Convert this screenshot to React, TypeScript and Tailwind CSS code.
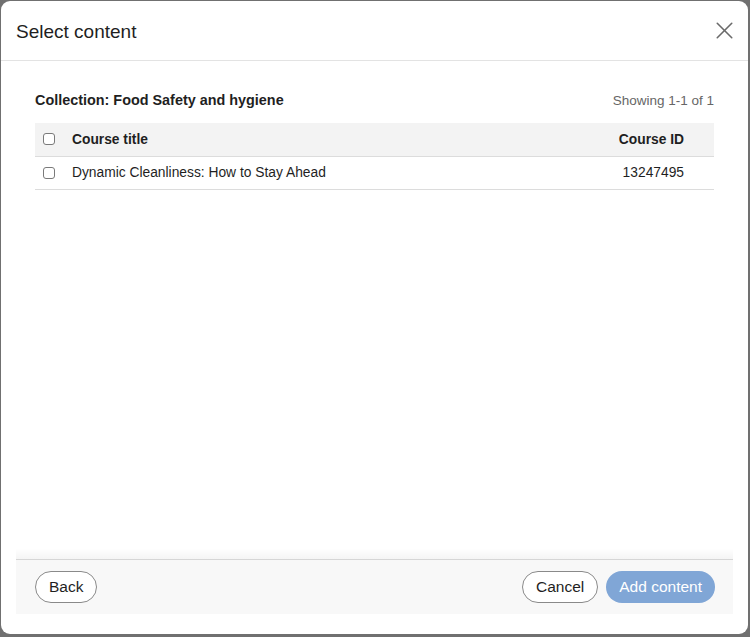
import { X } from "lucide-react";

interface Course {
  title: string;
  id: string;
}

const courses: Course[] = [
  { title: "Dynamic Cleanliness: How to Stay Ahead", id: "13247495" },
];

const Checkbox = () => (
  <span className="inline-block w-[12px] h-[12px] rounded-[3px] border border-[#7a7a7a] bg-white" />
);

export default function App() {
  return (
    <div
      className="h-[637px] w-[750px] bg-[#707070] pt-px pl-px pr-[2px] pb-[3px]"
      style={{ fontFamily: '"Liberation Sans", Arial, sans-serif' }}
    >
      <div className="h-full w-full bg-white rounded-[9px] flex flex-col overflow-hidden">
        {/* Header */}
        <div className="h-[60px] shrink-0 border-b border-[#e3e3e3] flex items-center justify-between pl-[15px] pr-[9px] pt-[3px]">
          <h1 className="text-[19px] text-[#1f1f1f]">Select content</h1>
          <X className="w-[29px] h-[29px] text-[#6a6a6a] -mt-[3px]" strokeWidth={1.3} />
        </div>

        {/* Body */}
        <div className="flex-1 px-[34px] pt-[30px]">
          <div className="flex items-center justify-between h-[20px]">
            <h2 className="text-[14.4px] font-bold text-[#1f1f1f]">
              Collection: Food Safety and hygiene
            </h2>
            <span className="text-[13.5px] text-[#666]">Showing 1-1 of 1</span>
          </div>

          <table className="w-full mt-[12px] border-collapse text-[13.8px] text-[#1f1f1f]">
            <thead>
              <tr className="bg-[#f3f3f3] border-b border-[#dcdcdc] h-[33px]">
                <th className="w-[37px] pl-[8px] text-left align-middle">
                  <div className="flex">
                    <Checkbox />
                  </div>
                </th>
                <th className="text-left font-bold pt-[2px]">Course title</th>
                <th className="text-right font-bold pr-[30px] pt-[2px]">Course ID</th>
              </tr>
            </thead>
            <tbody>
              {courses.map((c) => (
                <tr key={c.id} className="border-b border-[#dcdcdc] h-[33px]">
                  <td className="pl-[8px] align-middle">
                    <div className="flex">
                      <Checkbox />
                    </div>
                  </td>
                  <td className="pt-[2px]">{c.title}</td>
                  <td className="text-right pr-[30px] pt-[2px]">{c.id}</td>
                </tr>
              ))}
            </tbody>
          </table>
        </div>

        {/* Footer */}
        <div className="shrink-0 px-[15px] pb-[20px]">
          <div className="h-[11px] bg-gradient-to-b from-transparent to-black/[0.04]" />
          <div className="border-t border-[#d6d6d6] bg-[#f8f8f8] h-[55px] flex items-center justify-between pl-[19px] pr-[18px]">
            <button className="h-[32px] px-[13px] rounded-full border border-[#8a8a8a] bg-white text-[15.5px] text-[#1f1f1f]">
              Back
            </button>
            <div className="flex items-center gap-[8px]">
              <button className="h-[32px] px-[13px] rounded-full border border-[#8a8a8a] bg-white text-[15.5px] text-[#1f1f1f]">
                Cancel
              </button>
              <button className="h-[32px] px-[13px] rounded-full bg-[#80a6d6] text-[15.5px] text-white">
                Add content
              </button>
            </div>
          </div>
        </div>
      </div>
    </div>
  );
}
